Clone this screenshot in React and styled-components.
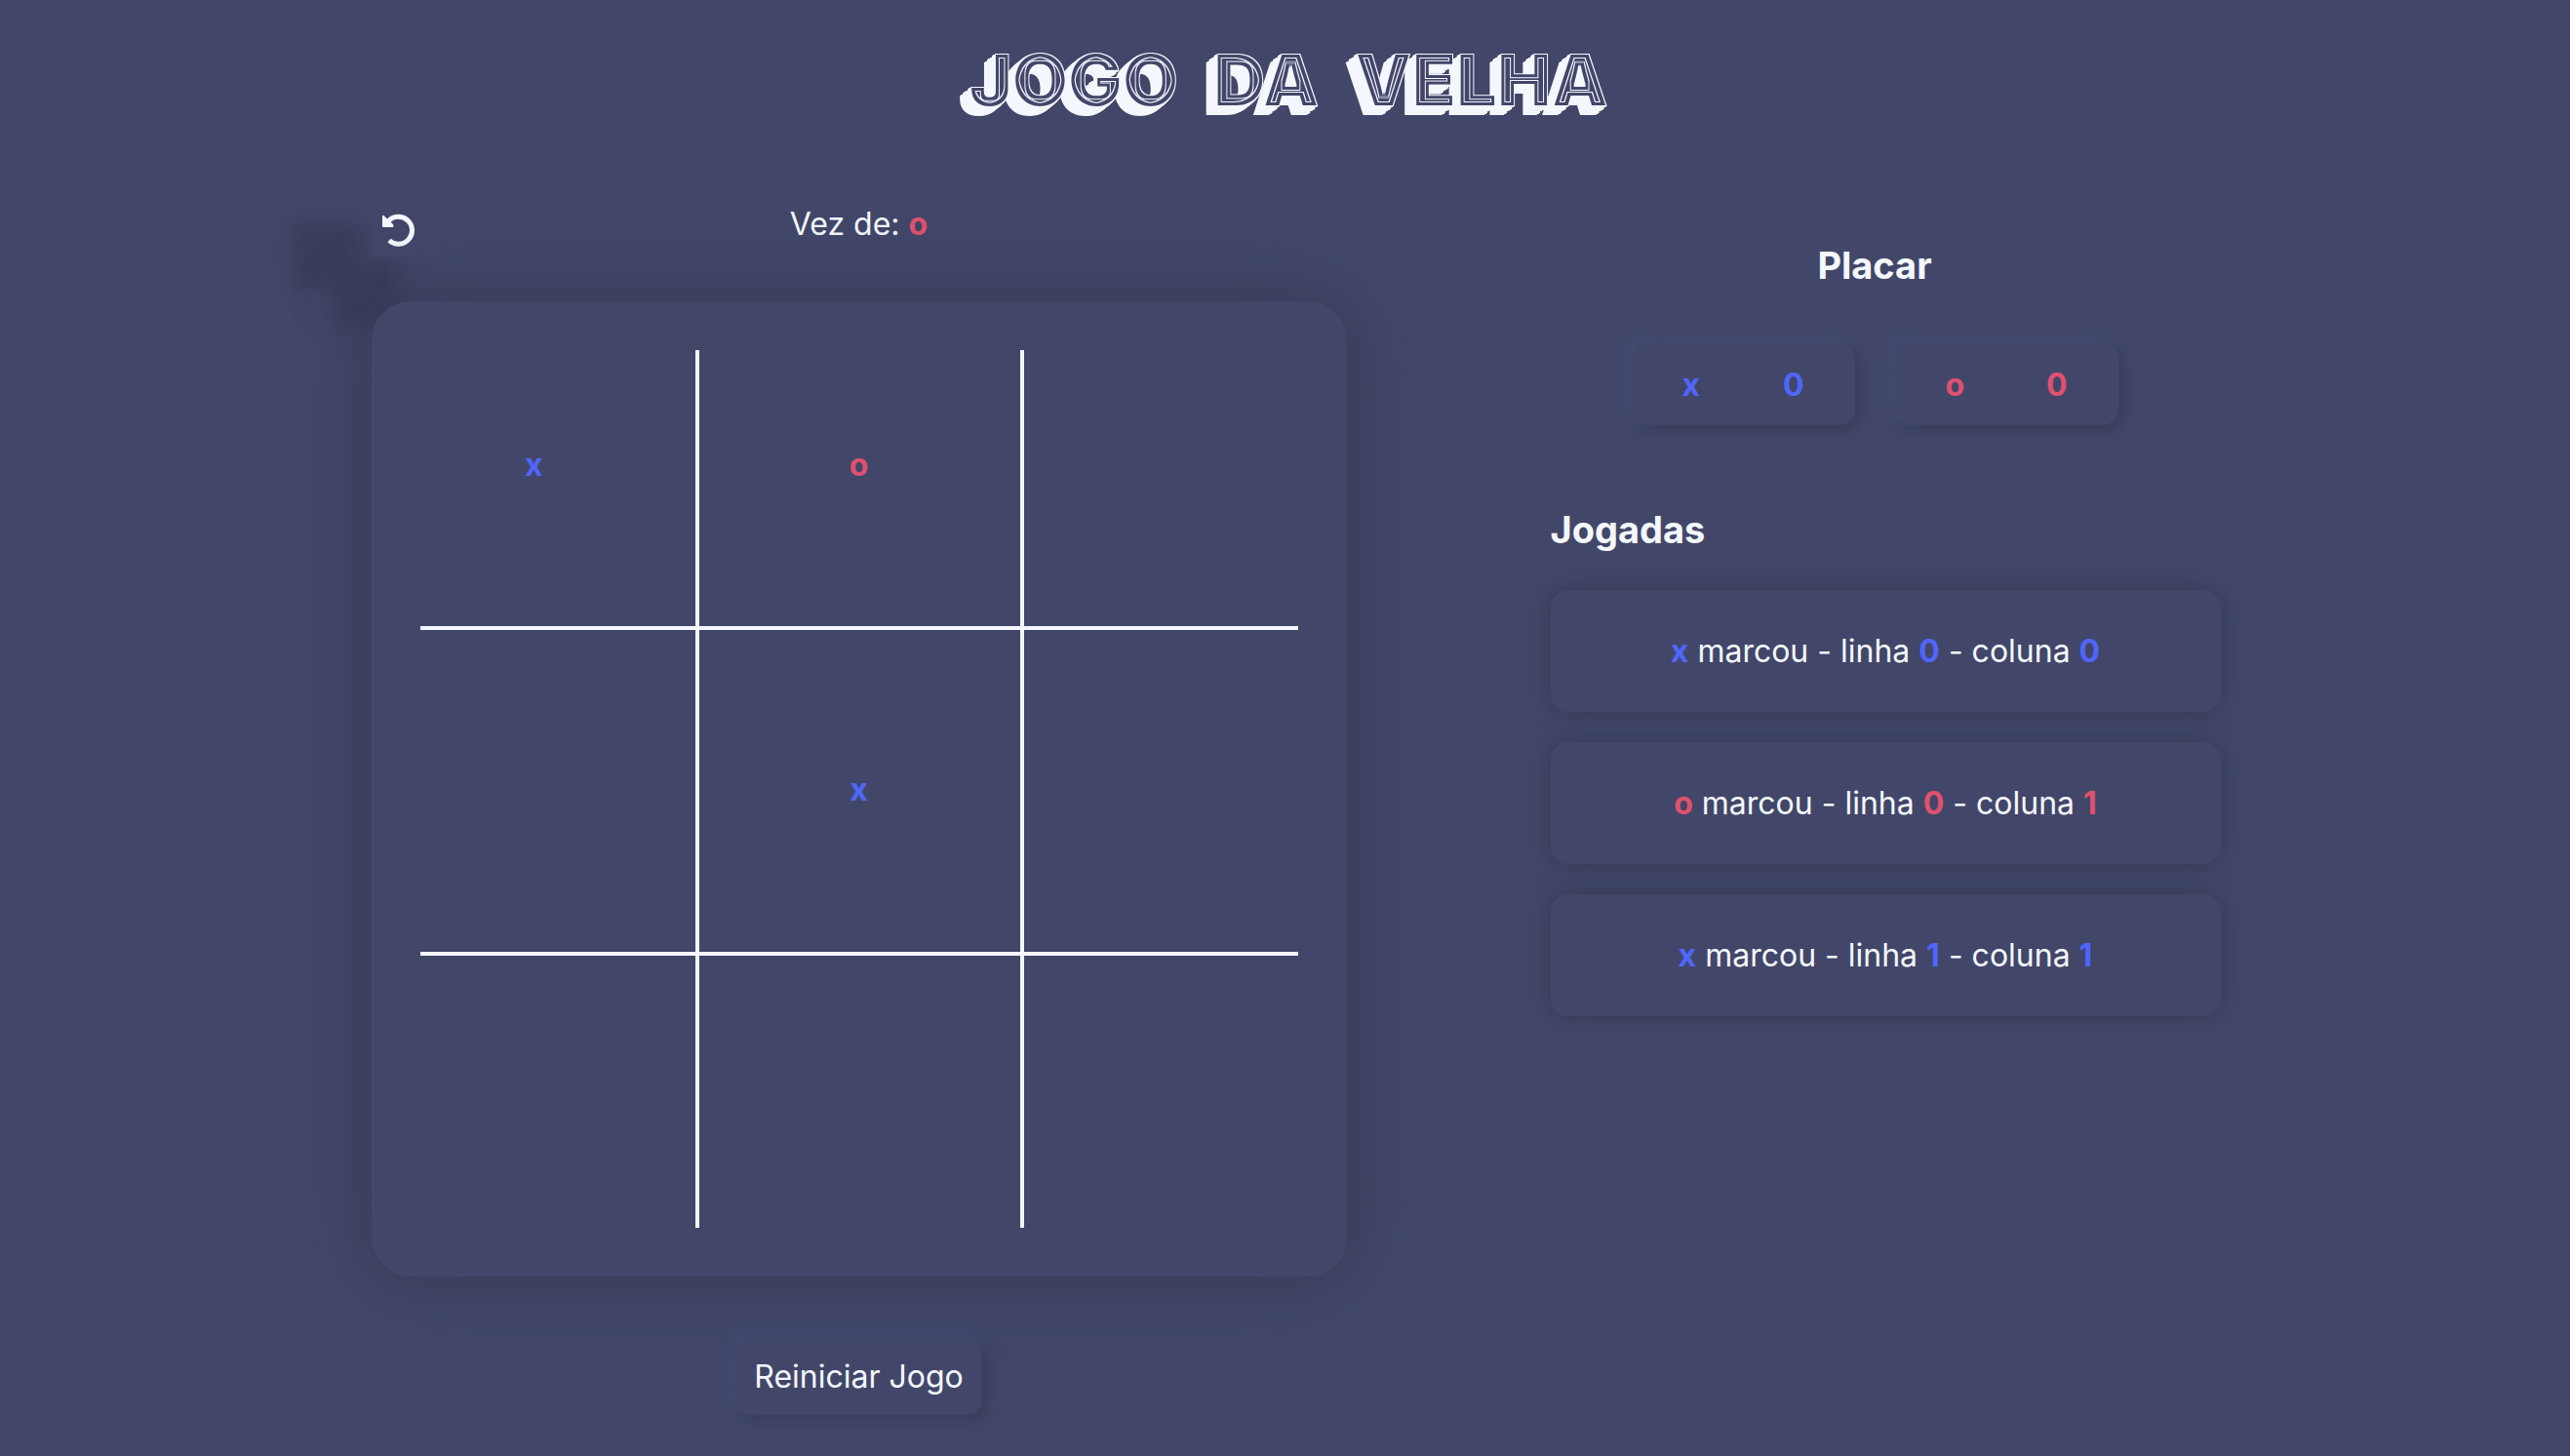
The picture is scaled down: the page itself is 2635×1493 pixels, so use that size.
import React, { useState } from "react";
import styled, { createGlobalStyle } from "styled-components";

const INITIAL_MOVES = [
  { player: "x", row: 0, col: 0 },
  { player: "o", row: 0, col: 1 },
  { player: "x", row: 1, col: 1 },
];
const CELLS = [0, 1, 2, 3, 4, 5, 6, 7, 8];
const playerColor = ({ $player }) => ($player === "x" ? "#4f66ff" : "#e0516f");

const GlobalStyle = createGlobalStyle`
  *, *::before, *::after { box-sizing: border-box; }
  body {
    margin: 0;
    min-height: 100vh;
    background: #424769;
    color: #f5f7ff;
    font-family: Inter, "Open Sans", sans-serif;
    font-size: 32px;
    line-height: 48px;
  }
  h1, h2, p, ul { margin: 0; padding: 0; }
  button { font: inherit; color: inherit; border: 0; cursor: pointer; }
`;

const Header = styled.header`
  display: flex;
  justify-content: center;
  padding: 38px 24px 0;
  height: 204px;
`;

const Title = styled.h1`
  display: flex;
  gap: 36px;
  padding-left: 8px;
  font-size: 74px;
  line-height: 88px;
  font-weight: 900;
  text-transform: uppercase;
  white-space: nowrap;
  filter: url(#shade);
`;

const Defs = styled.svg`
  position: absolute;
`;

const Main = styled.main`
  display: flex;
  justify-content: center;
  align-items: flex-start;
  gap: 209px;
`;

const Game = styled.section`
  display: flex;
  flex-direction: column;
  align-items: center;
  width: min(1000px, 38vw);
`;

const StatusBar = styled.div`
  display: grid;
  grid-template-columns: 54px 1fr 54px;
  width: 100%;
  height: 64px;
  margin-bottom: 41px;
`;

const UndoButton = styled.button`
  display: grid;
  place-items: center;
  align-self: center;
  width: 54px;
  height: 54px;
  padding: 0;
  background: transparent;
  box-shadow: -74px 25px 20px 8px #393e5b, -32px 67px 20px 8px #393e5b;
`;

const Turn = styled.p`
  line-height: 51px;
  text-align: center;
`;

const Mark = styled.strong`
  color: ${playerColor};
  font-weight: 700;
`;

const Board = styled.div`
  position: relative;
  display: grid;
  grid-template: repeat(3, 1fr) / repeat(3, 1fr);
  width: 100%;
  aspect-ratio: 1;
  border-radius: 40px;
  background: #424769;
  box-shadow: 0 0 76px #343952;
`;

const Cell = styled.button`
  padding: 2px 0 0;
  background: transparent;
`;

const Line = styled.span`
  position: absolute;
  background: #f5f7ff;
  pointer-events: none;
  ${({ $vertical, $at }) =>
    $vertical
      ? `top: 5%; bottom: 5%; width: 4px; left: calc(${$at}% / 3 - 1px);`
      : `left: 5%; right: 5%; height: 4px; top: calc(${$at}% / 3);`}
`;

const raised = `
  background: #424769;
  border-radius: 16px;
  box-shadow: 6px 6px 14px #393e5b, -6px -6px 14px #424d74;
`;

const Restart = styled.button`
  ${raised}
  position: relative;
  margin-top: 63px;
  padding: 16px 19px 15px;
`;

const Side = styled.aside`
  flex: 0 1 665px;
  padding-top: 44px;
`;

const Heading = styled.h2`
  font-size: 38px;
  line-height: 48px;
  font-weight: 700;
  text-align: ${({ $align }) => $align};
`;

const Scores = styled.div`
  display: flex;
  justify-content: center;
  gap: 41px;
  margin: 56px 0 83px;
`;

const Score = styled.div`
  ${raised}
  display: flex;
  justify-content: space-between;
  width: 229px;
  padding: 19px 52px 17px;
`;

const Moves = styled.ul`
  display: grid;
  gap: 31px;
  width: calc(100% + 22px);
  margin-top: 38px;
  list-style: none;
`;

const Move = styled.li`
  padding: 39px 24px 38px;
  text-align: center;
  border-radius: 18px;
  background: #424769;
  box-shadow: 0 0 24px #343952;
`;

export default function App() {
  const [moves, setMoves] = useState(INITIAL_MOVES);
  const next = moves.length % 2 ? "o" : "x";
  const at = (i) => moves.find((m) => m.row * 3 + m.col === i);
  const play = (i) =>
    at(i) || setMoves([...moves, { player: next, row: Math.floor(i / 3), col: i % 3 }]);

  return (
    <>
      <GlobalStyle />
      <Defs width="0" height="0" aria-hidden="true">
        <filter id="shade" x="-5%" y="-10%" width="110%" height="130%" colorInterpolationFilters="sRGB">
          <feMorphology in="SourceAlpha" operator="erode" radius="1" result="e1" />
          <feMorphology in="SourceAlpha" operator="erode" radius="4" result="e4" />
          <feMorphology in="SourceAlpha" operator="erode" radius="5" result="e5" />
          <feFlood floodColor="#f5f7ff" result="light" />
          <feFlood floodColor="#424769" result="dark" />
          <feOffset in="SourceAlpha" dx="-1" dy="1" result="o1" />
          <feMerge result="m1"><feMergeNode in="SourceAlpha" /><feMergeNode in="o1" /></feMerge>
          <feOffset in="m1" dx="-2" dy="1" result="o2" />
          <feMerge result="m2"><feMergeNode in="m1" /><feMergeNode in="o2" /></feMerge>
          <feOffset in="m2" dx="-3" dy="3" result="o3" />
          <feMerge result="m3"><feMergeNode in="m2" /><feMergeNode in="o3" /></feMerge>
          <feOffset in="m3" dx="-5" dy="4" result="o4" />
          <feMerge result="m4"><feMergeNode in="m3" /><feMergeNode in="o4" /></feMerge>
          <feComposite in="light" in2="m4" operator="in" result="solid" />
          <feComposite in="dark" in2="e1" operator="in" result="face" />
          <feComposite in="e4" in2="e5" operator="out" result="ring" />
          <feComposite in="light" in2="ring" operator="in" result="inline" />
          <feMerge>
            <feMergeNode in="solid" />
            <feMergeNode in="face" />
            <feMergeNode in="inline" />
          </feMerge>
        </filter>
      </Defs>
      <Header>
        <Title>
          <span>Jogo</span> <span>da</span> <span>Velha</span>
        </Title>
      </Header>
      <Main>
        <Game>
          <StatusBar>
            <UndoButton type="button" aria-label="Desfazer" onClick={() => setMoves(moves.slice(0, -1))}>
              <svg width="34" height="34" viewBox="0 0 34 34" fill="none">
                <path d="M8 27.500A14 14 0 1 0 7 8" stroke="#f5f7ff" strokeWidth="5" />
                <path d="M1 3Q1 1 3 2.500L12 11Q13.500 13.500 11 14H2Q1 14 1 13Z" fill="#f5f7ff" />
              </svg>
            </UndoButton>
            <Turn>Vez de: <Mark $player={next}>{next}</Mark></Turn>
          </StatusBar>
          <Board>
            {CELLS.map((i) => (
              <Cell key={i} type="button" aria-label={`Casa ${i + 1}`} onClick={() => play(i)}>
                {at(i) && <Mark $player={at(i).player}>{at(i).player}</Mark>}
              </Cell>
            ))}
            <Line $vertical $at={100} />
            <Line $vertical $at={200} />
            <Line $at={100} />
            <Line $at={200} />
          </Board>
          <Restart type="button" onClick={() => setMoves([])}>Reiniciar Jogo</Restart>
        </Game>
        <Side>
          <Heading $align="center">Placar</Heading>
          <Scores>
            {["x", "o"].map((p) => (
              <Score key={p}>
                <Mark $player={p}>{p}</Mark>
                <Mark $player={p}>0</Mark>
              </Score>
            ))}
          </Scores>
          <Heading $align="left">Jogadas</Heading>
          <Moves>
            {moves.map(({ player, row, col }) => (
              <Move key={`${row}${col}`}>
                <Mark $player={player}>{player}</Mark> marcou - linha <Mark $player={player}>{row}</Mark> - coluna{" "}
                <Mark $player={player}>{col}</Mark>
              </Move>
            ))}
          </Moves>
        </Side>
      </Main>
    </>
  );
}
